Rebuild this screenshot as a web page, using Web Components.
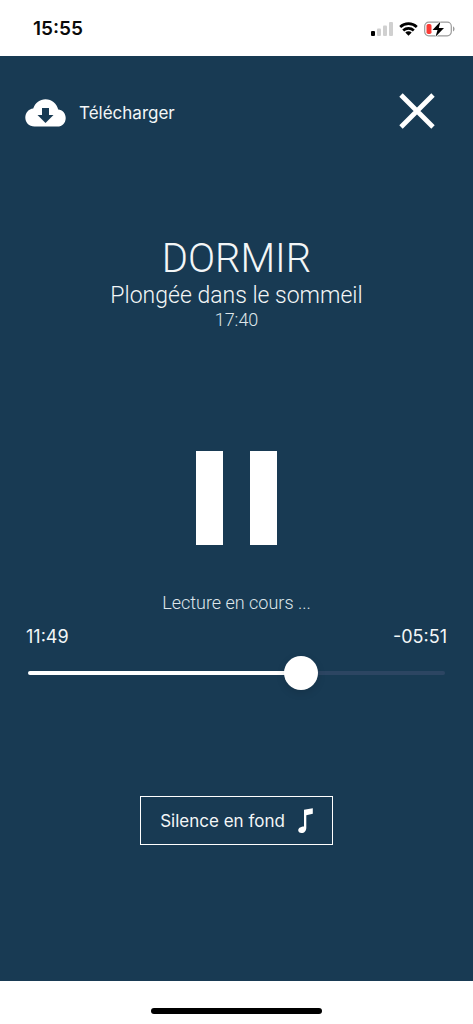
<!DOCTYPE html>
<html lang="fr">
<head>
<meta charset="utf-8">
<meta name="viewport" content="width=device-width, initial-scale=1">
<title>Dormir</title>
<style>
  html, body { height: 100%; margin: 0; }
  body { background: #fff; font-family: Inter, "Liberation Sans", sans-serif; }
</style>
</head>
<body>
<sleep-app></sleep-app>
<script>
const define = (name, html, setup) => {
  const template = document.createElement('template');
  template.innerHTML = html;
  customElements.define(name, class extends HTMLElement {
    constructor() {
      super();
      this.attachShadow({ mode: 'open' }).append(template.content.cloneNode(true));
    }
    connectedCallback() { if (setup) setup(this, this.shadowRoot); }
  });
};

define('status-bar', `
  <style>
    :host { display: flex; align-items: center; justify-content: space-between; height: 56px; padding: 2px 18px 0 33px; box-sizing: border-box; color: #0a0a0a; background: #fff; }
    time { font-size: 19px; line-height: 24px; font-weight: 600; }
    .icons { display: flex; align-items: center; gap: 6px; }
    svg { display: block; }
  </style>
  <time><slot></slot></time>
  <div class="icons">
    <svg width="22" height="14" viewBox="0 0 22 14" aria-label="Réseau">
      <rect x="0" y="9" width="4" height="5" rx="1" fill="#000"/>
      <g fill="#d0d0d0"><rect x="6" y="6.5" width="4" height="7.5" rx="1"/><rect x="12" y="3.5" width="4" height="10.5" rx="1"/><rect x="18" y="0" width="4" height="14" rx="1"/></g>
    </svg>
    <svg width="19" height="14" viewBox="0 0 19 14" aria-label="Wi-Fi">
      <g fill="none" stroke="#000" stroke-width="2.7"><path d="M1.2 5a12 12 0 0 1 16.6 0"/><path d="M4.2 8.500a7.7 7.7 0 0 1 10.6 0"/></g>
      <path d="M9.500 13.700 6.300 10.600a4.600 4.600 0 0 1 6.400 0z" fill="#000"/>
    </svg>
    <svg width="31" height="16" viewBox="0 0 31 16" aria-label="Batterie faible, en charge">
      <rect x=".7" y="1.2" width="26.6" height="13.6" rx="4" fill="none" stroke="#9b9b9b" stroke-width="1.2"/>
      <path d="M29 5.600c2 .6 2 4.200 0 4.800z" fill="#9b9b9b"/>
      <rect x="2.5" y="3" width="5" height="10" rx="1.8" fill="#fb3b35"/>
      <path d="M16.500.5 8.500 9h5l-2 6.800L20 7h-5.200z" fill="#000" stroke="#fff" stroke-width="1.2" paint-order="stroke"/>
    </svg>
  </div>`);

define('top-actions', `
  <style>
    :host { display: flex; align-items: center; justify-content: space-between; padding: 0 38px 0 25px; height: 40px; }
    button { display: flex; align-items: center; gap: 13px; padding: 0; border: 0; background: none; color: inherit; font: inherit; font-size: 17px; line-height: 24px; cursor: pointer; }
    .download { padding-top: 4px; }
    svg { display: block; }
  </style>
  <button class="download" type="button">
    <svg width="41" height="28" viewBox="0 0 41 28" aria-hidden="true">
      <path d="M9.500 27.500C4 27.500.3 23.500.3 18.500c0-4.700 3.300-8.600 7.900-9.100C10.300 3.900 14.900.3 20.400.3c6.500 0 11.500 4.300 12.800 10.300 4.200.3 7.500 3.900 7.500 8.300 0 5-3.700 8.600-8.200 8.600z" fill="#fff"/>
      <path d="M17 9h7v7h4.500L20.500 24l-8-8H17z" fill="#183a53"/>
    </svg>
    <slot></slot>
  </button>
  <button type="button" aria-label="Fermer">
    <svg width="36" height="36" viewBox="0 0 36 36" aria-hidden="true"><path d="M2 2 34 34M34 2 2 34" stroke="#fff" stroke-width="4.8"/></svg>
  </button>`);

define('track-heading', `
  <style>
    :host { display: block; text-align: center; font-family: Roboto, "Liberation Sans", sans-serif; font-weight: 300; }
    h1, p { margin: 0; font-weight: 300; }
    h1 { font-size: 40px; line-height: 48px; }
    .subtitle { font-size: 23px; line-height: 26px; }
    .length { font-size: 18px; line-height: 22px; color: #dfe6ea; }
  </style>
  <h1><slot name="title"></slot></h1>
  <p class="subtitle"><slot name="subtitle"></slot></p>
  <p class="length"><slot name="length"></slot></p>`);

define('pause-button', `
  <style>
    :host { display: flex; justify-content: center; }
    button { display: flex; gap: 27px; padding: 0; border: 0; background: none; cursor: pointer; }
    span { width: 27px; height: 94px; background: #fff; }
  </style>
  <button type="button" aria-label="Pause"><span></span><span></span></button>`);

define('play-progress', `
  <style>
    :host { display: block; padding: 0 26px; }
    .state { margin: 0; text-align: center; font: 300 18px/24px Roboto, "Liberation Sans", sans-serif; color: #dfe6ea; }
    .times { display: flex; justify-content: space-between; margin-top: 10px; font-size: 18px; line-height: 24px; }
    input { -webkit-appearance: none; appearance: none; display: block; width: calc(100% - 4px); height: 34px; margin: 7px 2px 0; background: none; cursor: pointer; }
    input::-webkit-slider-runnable-track { height: 4px; border-radius: 2px; background: linear-gradient(to right, #fff var(--played), #2c4562 var(--played)); }
    input::-webkit-slider-thumb { -webkit-appearance: none; width: 34px; height: 34px; margin-top: -15px; border-radius: 50%; background: #fff; box-shadow: 0 3px 8px rgba(0, 0, 0, .12); }
  </style>
  <p class="state"><slot></slot></p>
  <div class="times"><span class="elapsed"></span><span class="left"></span></div>
  <input type="range" min="0" aria-label="Position de lecture">`,
  (host, root) => {
    const input = root.querySelector('input');
    const clock = s => [Math.floor(s / 60), s % 60].map(n => String(n).padStart(2, '0')).join(':');
    const update = () => {
      const value = Number(input.value), max = Number(input.max);
      root.querySelector('.elapsed').textContent = clock(value);
      root.querySelector('.left').textContent = '-' + clock(max - value);
      input.style.setProperty('--played', (100 * value / max) + '%');
    };
    input.max = host.getAttribute('duration');
    input.value = host.getAttribute('position');
    input.addEventListener('input', update);
    update();
  });

define('sound-button', `
  <style>
    :host { display: flex; justify-content: center; }
    button { display: flex; align-items: center; gap: 13px; height: 49px; padding: 0 19px; border: 1px solid #fff; background: none; color: inherit; font: inherit; font-size: 17px; line-height: 24px; cursor: pointer; }
    svg { display: block; }
  </style>
  <button type="button">
    <slot></slot>
    <svg width="15" height="26" viewBox="0 0 15 26" aria-hidden="true"><path d="M6 1.800 14.800.3v5.500L8.300 7.200v12.500c0 3-1.800 5.300-4.800 5.300-2 0-3.300-1.100-3.300-2.700 0-2.400 2.800-3.600 5.800-3.800z" fill="#fff"/></svg>
  </button>`);

define('sleep-app', `
  <style>
    :host { display: flex; flex-direction: column; min-height: 100vh; }
    main { display: flow-root; flex: 1; background: #183a53; color: #f3f6f7; }
    top-actions { margin-top: 35px; }
    track-heading { margin-top: 104px; }
    pause-button { margin-top: 120px; }
    play-progress { margin-top: 46px; }
    sound-button { margin-top: 106px; }
    footer { display: flex; align-items: center; justify-content: center; height: 43px; padding-top: 16px; box-sizing: border-box; background: #fff; }
    .home { width: 36%; height: 6px; border-radius: 3px; background: #000; }
  </style>
  <status-bar>15:55</status-bar>
  <main>
    <top-actions>Télécharger</top-actions>
    <track-heading><span slot="title">DORMIR</span><span slot="subtitle">Plongée dans le sommeil</span><span slot="length">17:40</span></track-heading>
    <pause-button></pause-button>
    <play-progress duration="1060" position="709">Lecture en cours ...</play-progress>
    <sound-button>Silence en fond</sound-button>
  </main>
  <footer><div class="home"></div></footer>`);
</script>
</body>
</html>
